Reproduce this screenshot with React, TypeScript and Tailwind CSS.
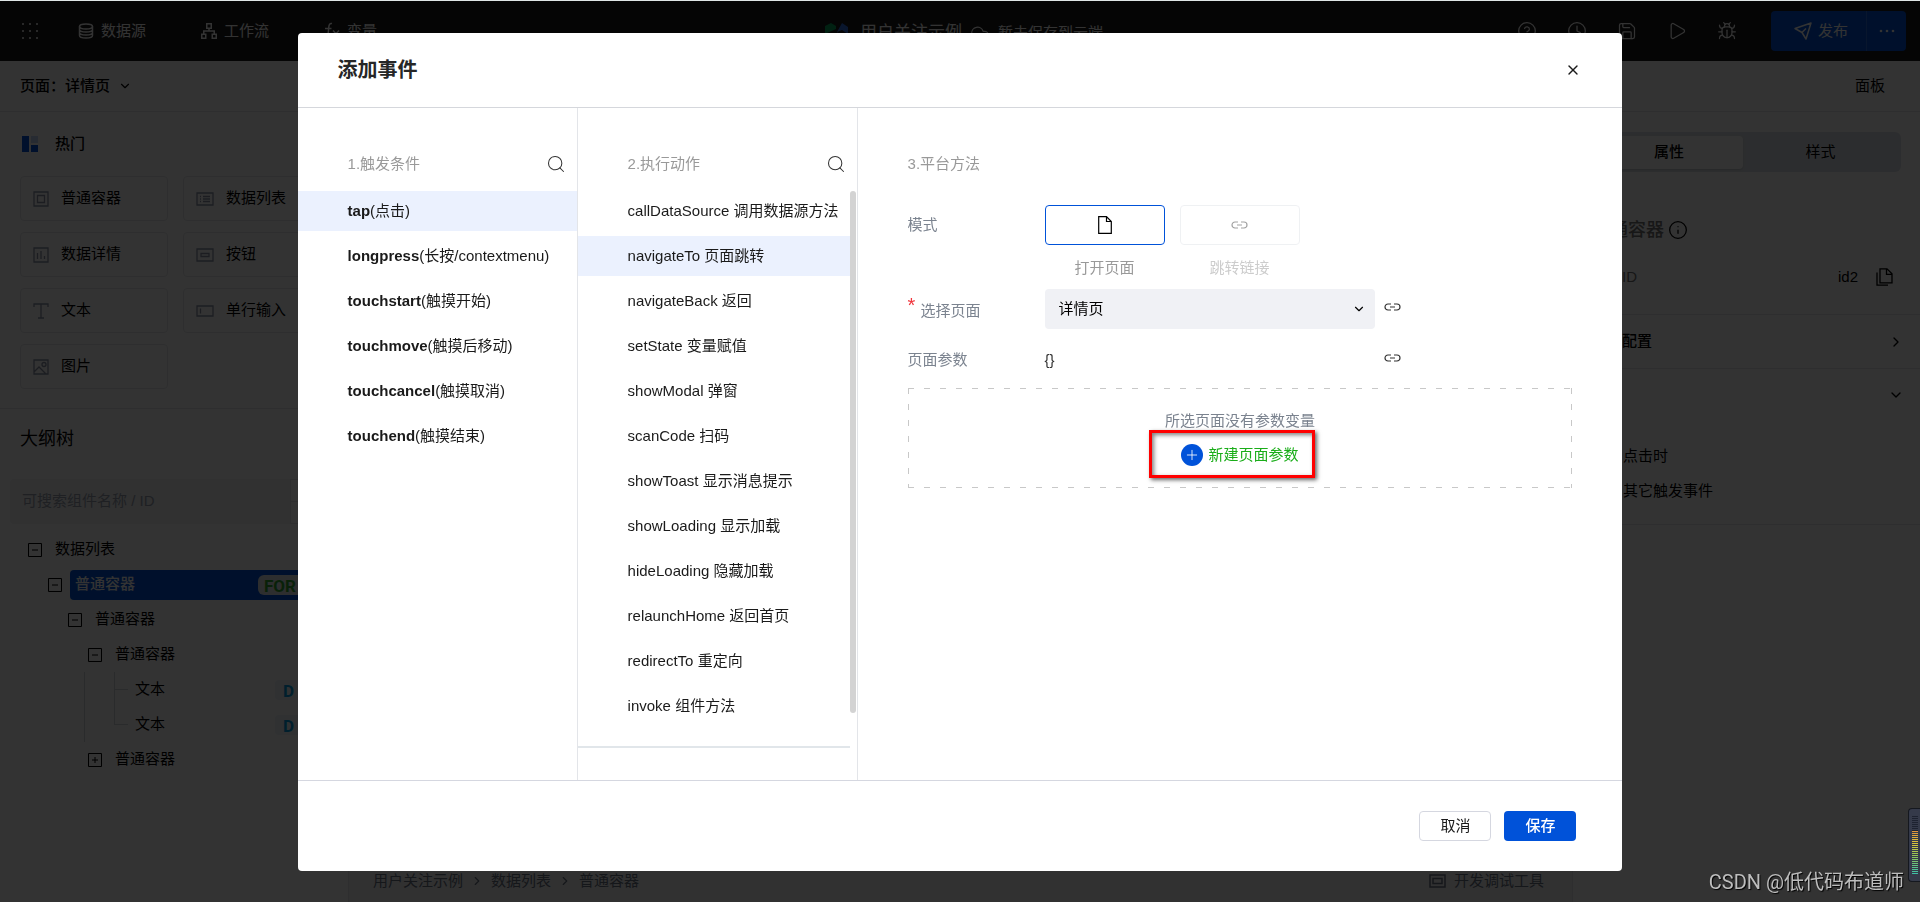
import { useState } from "react";
import type { ReactNode } from "react";
import {
  Bug,
  ChevronDown,
  ChevronRight,
  CircleHelp,
  Clock,
  Cloud,
  Info,
  Play,
  Plus,
  Save,
  Search,
  X,
} from "lucide-react";

interface Trigger {
  name: string;
  desc: string;
}

interface Action {
  name: string;
  desc: string;
}

const TRIGGERS: Trigger[] = [
  { name: "tap", desc: "(点击)" },
  { name: "longpress", desc: "(长按/contextmenu)" },
  { name: "touchstart", desc: "(触摸开始)" },
  { name: "touchmove", desc: "(触摸后移动)" },
  { name: "touchcancel", desc: "(触摸取消)" },
  { name: "touchend", desc: "(触摸结束)" },
];

const ACTIONS: Action[] = [
  { name: "callDataSource", desc: "调用数据源方法" },
  { name: "navigateTo", desc: "页面跳转" },
  { name: "navigateBack", desc: "返回" },
  { name: "setState", desc: "变量赋值" },
  { name: "showModal", desc: "弹窗" },
  { name: "scanCode", desc: "扫码" },
  { name: "showToast", desc: "显示消息提示" },
  { name: "showLoading", desc: "显示加载" },
  { name: "hideLoading", desc: "隐藏加载" },
  { name: "relaunchHome", desc: "返回首页" },
  { name: "redirectTo", desc: "重定向" },
  { name: "invoke", desc: "组件方法" },
];

/* ---------- icons ---------- */

function GridIcon() {
  return (
    <svg width="16" height="16" viewBox="0 0 16 16" fill="currentColor">
      {[0, 7, 14].map((y) => [0, 7, 14].map((x) => <rect key={`${x}-${y}`} x={x} y={y} width="2" height="2" rx="1" />))}
    </svg>
  );
}

function DatabaseIcon() {
  return (
    <svg width="16" height="16" viewBox="0 0 16 16" fill="none" stroke="currentColor" strokeWidth="1.5">
      <ellipse cx="8" cy="3.5" rx="6.5" ry="2.5" />
      <path d="M1.5 3.5v9c0 1.4 2.9 2.5 6.5 2.5s6.5-1.1 6.5-2.5v-9M1.5 6.5c0 1.4 2.9 2.5 6.5 2.5s6.5-1.1 6.5-2.5M1.5 9.5c0 1.4 2.9 2.5 6.5 2.5s6.5-1.1 6.5-2.5" />
    </svg>
  );
}

function FlowIcon() {
  return (
    <svg width="16" height="16" viewBox="0 0 16 16" fill="none" stroke="currentColor" strokeWidth="1.5">
      <path d="M5.75.75h4.5v4.5h-4.5zM.75 11.25h4v4h-4zM11.25 11.25h4v4h-4zM8 5.5V8M2.75 11V8h10.5v3" />
    </svg>
  );
}

function FxIcon() {
  return (
    <svg width="16" height="18" viewBox="0 0 16 18" fill="none" stroke="currentColor" strokeWidth="1.5">
      <path d="M8 1.500C5.500 1 5 3 4.800 5L4 13c-.3 2.500-1.500 3-3 2.500M1 6.500h6.500M9 8.500l6 6.500M15 8.500l-6 6.500" />
    </svg>
  );
}

function LogoIcon() {
  return (
    <svg width="23" height="20" viewBox="0 0 23 20">
      <path d="M0 3 6 0l5 3v3L0 11z" fill="#07a35a" />
      <path d="M0 11l6 3 5-4v6l-5 4-6-4z" fill="#078a4d" />
      <path d="M12 9 17 0l6 4v7l-6-4z" fill="#2f6fe0" />
      <path d="M12 9v7l5 4 6-4v-5l-6 3z" fill="#2458bd" />
    </svg>
  );
}

function SendIcon() {
  return (
    <svg width="18" height="18" viewBox="0 0 18 18" fill="none" stroke="currentColor" strokeWidth="1.5" strokeLinejoin="round">
      <path d="M1 6.500 17 1l-5 16-4-6.500zM8 10.500l4-4" />
    </svg>
  );
}

function DotsIcon() {
  return (
    <svg width="16" height="4" viewBox="0 0 16 4" fill="currentColor">
      <circle cx="2" cy="2" r="1.3" />
      <circle cx="8" cy="2" r="1.3" />
      <circle cx="14" cy="2" r="1.3" />
    </svg>
  );
}

function LinkIcon() {
  return (
    <svg width="17" height="8" viewBox="0 0 17 8" fill="none" stroke="currentColor" strokeWidth="1.2">
      <path d="M7 1H4a3 3 0 0 0 0 6h3M10 1h3a3 3 0 0 1 0 6h-3M6 4h5" />
    </svg>
  );
}

function FileIcon() {
  return (
    <svg width="16" height="18" viewBox="0 0 16 18" fill="none" stroke="currentColor" strokeWidth="1.2">
      <path d="M1.700.7h7.800l4.800 4.800v11.800H1.700zM9.500.7v4.800h4.800" />
    </svg>
  );
}

function CopyIcon() {
  return (
    <svg width="17" height="18" viewBox="0 0 17 18" fill="none" stroke="currentColor" strokeWidth="1.3">
      <path d="M4 .8h7l5 5v9H4zM10.500.8v5.500H16M1 4.500v12.700h11" />
    </svg>
  );
}

function ToggleIcon({ open }: { open: boolean }) {
  return (
    <svg width="14" height="14" viewBox="0 0 14 14" fill="none" stroke="currentColor">
      <path d="M.5.5h13v13H.5zM4 7h6" />
      {!open && <path d="M7 4v6" />}
    </svg>
  );
}

const COMPONENTS: { label: string; width: number; icon: string }[] = [
  { label: "普通容器", width: 16, icon: "M1 1h14v14H1zM4.5 4.5h7v7h-7z" },
  { label: "数据列表", width: 18, icon: "M1 2h16v12H1zM4 5.5h1M7 5.5h7M4 8h1M7 8h7M4 10.5h1M7 10.5h7" },
  { label: "数据详情", width: 16, icon: "M1 1h14v14H1zM4.5 6v6M8 4v8M11.5 9v3" },
  { label: "按钮", width: 18, icon: "M1 2h16v12H1zM5 6.5h8v3H5z" },
  { label: "文本", width: 16, icon: "M1 4V1h14v3M8 1v14M5 15h6" },
  { label: "单行输入", width: 18, icon: "M1 3h16v10H1zM4.5 5.5v5" },
  { label: "图片", width: 16, icon: "M1 1h14v14H1zM1 13l5-5 7 7M9 5.5a2 2 0 1 0 4 0 2 2 0 1 0-4 0" },
];

/* ---------- editor behind the dialog ---------- */

function TopBar() {
  return (
    <header className="flex h-[60px] items-center bg-[#1a1a1a] pr-3.5 pl-[22px] text-white">
      <div className="flex flex-1 items-center">
        <button aria-label="菜单" className="mr-10">
          <GridIcon />
        </button>
        <nav className="flex items-center gap-[55px]">
          <a href="#data" className="flex items-center gap-[7px]">
            <DatabaseIcon />
            数据源
          </a>
          <a href="#flow" className="flex items-center gap-[7px]">
            <FlowIcon />
            工作流
          </a>
          <a href="#vars" className="flex items-center gap-[7px]">
            <FxIcon />
            变量
          </a>
        </nav>
      </div>
      <div className="flex items-center gap-2 pt-1">
        <LogoIcon />
        <span className="ml-1 text-[17px]">用户关注示例</span>
        <Cloud size={20} strokeWidth={1.5} />
        <span>暂未保存到云端</span>
      </div>
      <div className="flex flex-1 items-center justify-end gap-[30px]">
        <button aria-label="帮助">
          <CircleHelp size={20} strokeWidth={1.5} />
        </button>
        <button aria-label="历史">
          <Clock size={20} strokeWidth={1.5} />
        </button>
        <button aria-label="保存草稿">
          <Save size={20} strokeWidth={1.5} />
        </button>
        <button aria-label="预览">
          <Play size={20} strokeWidth={1.5} />
        </button>
        <button aria-label="调试">
          <Bug size={20} strokeWidth={1.5} />
        </button>
        <div className="ml-1 flex h-10 overflow-hidden rounded bg-[#0052d9]">
          <button className="flex items-center gap-1.5 border-r border-[#2a6fe0] pr-[18px] pl-[23px]">
            <SendIcon />
            发布
          </button>
          <button aria-label="更多" className="w-[39px] pl-3">
            <DotsIcon />
          </button>
        </div>
      </div>
    </header>
  );
}

function TreeRow({ pad, open, children }: { pad: string; open?: boolean; children: ReactNode }) {
  return (
    <li className={`flex h-[35px] items-center gap-[13px] ${pad}`}>
      {open !== undefined && <ToggleIcon open={open} />}
      {children}
    </li>
  );
}

function DataBadge() {
  return (
    <span className="ml-auto h-5 w-[63px] rounded bg-[#eef4fb] pl-2 font-[Roboto] text-[17px] leading-[22px] font-bold text-[#009de0]">
      D
    </span>
  );
}

function LeftPanel() {
  return (
    <aside className="w-[349px] shrink-0 border-r border-gray-200">
      <section className="border-b border-gray-200 pt-5 pr-[17px] pb-[19px] pl-5">
        <h2 className="flex h-6 items-center gap-[17px] pl-0.5 font-medium">
          <svg width="16" height="16" viewBox="0 0 16 16">
            <path d="M0 0h7v16H0z" fill="#0052d9" />
            <path d="M9 0h7v7H9z" fill="#c3d6f8" />
            <path d="M9 9h7v7H9z" fill="#0052d9" />
          </svg>
          热门
        </h2>
        <div className="mt-5 grid grid-cols-2 gap-x-[15px] gap-y-[11px]">
          {COMPONENTS.map((c) => (
            <button key={c.label} className="flex h-[45px] items-center gap-3 rounded border border-gray-200 pl-3">
              <svg width={c.width} height="16" viewBox={`0 0 ${c.width} 16`} fill="none" stroke="#8a93a6" strokeWidth="1.3">
                <path d={c.icon} />
              </svg>
              {c.label}
            </button>
          ))}
        </div>
      </section>
      <section className="pt-4">
        <h2 className="px-5 text-lg leading-7">大纲树</h2>
        <div className="mt-[26px] flex h-[45px] px-2.5">
          <input
            aria-label="搜索组件"
            placeholder="可搜索组件名称 / ID"
            className="min-w-0 flex-1 rounded-l bg-gray-100 px-3 placeholder:text-gray-400"
          />
          <div className="w-12 border border-gray-200">
            <div className="h-[22px] border-b border-gray-200" />
          </div>
        </div>
        <ul className="mt-2 pr-2.5">
          <TreeRow pad="pl-7" open>
            数据列表
          </TreeRow>
          <TreeRow pad="pl-12" open>
            <span className="-ml-[5px] flex h-[30px] flex-1 items-center rounded-sm bg-[#0052d9] pl-[5px] font-medium text-white">
              普通容器
              <span className="ml-auto h-5 w-20 rounded-md bg-[#dfe5ea] pl-1.5 font-[Roboto] text-[17px] leading-[22px] font-bold text-[#2fa52f]">
                FOR
              </span>
            </span>
          </TreeRow>
          <TreeRow pad="pl-[68px]" open>
            普通容器
          </TreeRow>
          <TreeRow pad="pl-[88px]" open>
            普通容器
          </TreeRow>
          {/* leaf rows with guide lines */}
          <li className="ml-[84px] flex border-l border-gray-300">
            <div className="ml-[29px] w-3.5">
              <div className="h-[18px] border-b border-l border-gray-300" />
              <div className="h-[35px] border-b border-l border-gray-300" />
            </div>
            <ul className="flex-1 pl-[7px]">
              <TreeRow pad="">
                文本
                <DataBadge />
              </TreeRow>
              <TreeRow pad="">
                文本
                <DataBadge />
              </TreeRow>
            </ul>
          </li>
          <TreeRow pad="pl-[88px]" open={false}>
            普通容器
          </TreeRow>
        </ul>
      </section>
    </aside>
  );
}

function RightPanel() {
  return (
    <aside className="w-[348px] shrink-0 border-l border-gray-200">
      <section className="border-b border-gray-200 px-[19px] pt-5 pb-6">
        <div className="flex h-10 rounded-md bg-[#dde2e8] p-[3px] pt-1">
          <button className="w-[148px] rounded-sm bg-white font-medium shadow">属性</button>
          <button className="flex-1">样式</button>
        </div>
        <h2 className="mt-11 flex h-7 items-center gap-1 text-lg font-medium text-neutral-500">
          普通容器
          <Info size={20} strokeWidth={1.5} className="text-black" />
        </h2>
        <div className="mt-5 flex h-[26px] items-center pr-2">
          <span className="font-medium text-neutral-500">组件ID</span>
          <span className="mr-[18px] ml-auto">id2</span>
          <button aria-label="复制">
            <CopyIcon />
          </button>
        </div>
      </section>
      <section className="flex h-[54px] items-center justify-between border-b border-gray-200 pr-4 pl-[19px] font-medium">
        基础配置
        <ChevronRight size={16} />
      </section>
      <section className="border-b border-gray-200 pr-4 pb-4 pl-[50px]">
        <div className="flex h-[52px] items-center justify-end">
          <ChevronDown size={16} />
        </div>
        <p className="mt-[17px] h-[35px] leading-[35px]">点击时</p>
        <p className="h-[35px] leading-[35px]">其它触发事件</p>
      </section>
    </aside>
  );
}

function Editor() {
  return (
    <div className="flex flex-1 flex-col bg-white">
      <TopBar />
      <div className="flex h-[51px] items-center justify-between border-b border-gray-200 pr-[35px] pl-5">
        <button className="flex items-center gap-2 font-medium">
          页面：详情页
          <ChevronDown size={14} />
        </button>
        <button>面板</button>
      </div>
      <div className="flex flex-1">
        <LeftPanel />
        <main className="flex min-w-0 flex-1 flex-col justify-end bg-[#f4f5f6]">
          <footer className="flex h-[42px] items-center gap-[7px] pr-7 pl-6 text-gray-500">
            用户关注示例
            <ChevronRight size={14} />
            数据列表
            <ChevronRight size={14} />
            普通容器
            <button className="ml-auto flex items-center gap-2">
              <svg width="17" height="14" viewBox="0 0 17 14" fill="none" stroke="currentColor" strokeWidth="1.5">
                <path d="M1 1h15v12H1zM4 4.5h9v5H4z" />
              </svg>
              开发调试工具
            </button>
          </footer>
        </main>
        <RightPanel />
      </div>
    </div>
  );
}

/* ---------- dialog ---------- */

function ColumnTitle({ children, searchable }: { children: ReactNode; searchable?: boolean }) {
  return (
    <div className="flex h-[83px] items-end justify-between pr-[11px] pb-[17px] pl-[50px] leading-5 text-[#999]">
      <h3>{children}</h3>
      {searchable && (
        <button aria-label="搜索" className="text-[#333]">
          <Search size={20} strokeWidth={1.25} />
        </button>
      )}
    </div>
  );
}

function PageJumpForm() {
  const [mode, setMode] = useState("page");

  return (
    <section className="min-w-0 flex-1">
      <ColumnTitle>3.平台方法</ColumnTitle>
      <div className="px-[50px] pt-3.5 text-[#7b838f]">
        <div className="flex">
          <span className="w-[137px] leading-10">模式</span>
          <div className="flex gap-[15px] text-center">
            <div className="w-[120px]">
              <button
                aria-label="打开页面"
                aria-pressed={mode === "page"}
                onClick={() => setMode("page")}
                className="flex h-10 w-full items-center justify-center rounded border border-[#0052d9] text-black"
              >
                <FileIcon />
              </button>
              <p className="mt-2 leading-[30px] text-[#999]">打开页面</p>
            </div>
            <div className="w-[120px] opacity-50">
              <button
                aria-label="跳转链接"
                aria-pressed={mode === "link"}
                onClick={() => setMode("link")}
                className="flex h-10 w-full items-center justify-center rounded border border-[#e0e3e8] text-[#444]"
              >
                <LinkIcon />
              </button>
              <p className="mt-2 leading-[30px] text-[#999]">跳转链接</p>
            </div>
          </div>
        </div>

        <div className="mt-1.5 flex h-10 items-center">
          <label htmlFor="target-page" className="flex w-[137px] gap-[5px] pt-1 leading-10">
            <span className="text-xl leading-7 text-[#f0353c]">*</span>
            选择页面
          </label>
          <div className="relative w-[330px]">
            <select
              id="target-page"
              className="h-10 w-full appearance-none rounded bg-[#f0f1f5] px-3.5 text-black"
            >
              <option>详情页</option>
            </select>
            <ChevronDown size={14} className="pointer-events-none absolute top-[13px] right-[9px] text-black" />
          </div>
          <button aria-label="绑定页面" className="mb-1 ml-[9px] text-[#333]">
            <LinkIcon />
          </button>
        </div>

        <div className="mt-[11px] flex h-10 items-center">
          <span className="w-[137px]">页面参数</span>
          <span className="w-[330px] text-[#333]">{"{}"}</span>
          <button aria-label="绑定参数" className="mb-1 ml-[9px] text-[#333]">
            <LinkIcon />
          </button>
        </div>

        <div className="mt-2 flex flex-col items-center gap-2.5 bg-[repeating-linear-gradient(90deg,#c8c8c8_0_6px,transparent_6px_16px),repeating-linear-gradient(90deg,#c8c8c8_0_6px,transparent_6px_16px),repeating-linear-gradient(180deg,#c8c8c8_0_6px,transparent_6px_16px),repeating-linear-gradient(180deg,#c8c8c8_0_6px,transparent_6px_16px)] bg-[length:100%_1px,100%_1px,1px_100%,1px_100%] bg-[position:top,bottom,left,right] bg-no-repeat py-[21px]">
          <p className="leading-6">所选页面没有参数变量</p>
          <div className="relative">
            <button className="flex h-6 items-center gap-[5px] text-[#1aad19]">
              <span className="flex size-[22px] items-center justify-center rounded-full bg-[#0052d9] text-white">
                <Plus size={16} strokeWidth={1.25} />
              </span>
              新建页面参数
            </button>
            <div className="pointer-events-none absolute -top-[13px] -right-4 -bottom-[11px] -left-8 border-3 border-[#ff0000] shadow-[2px_2px_4px_rgba(0,0,0,0.6),inset_2px_2px_4px_rgba(0,0,0,0.5)]" />
          </div>
        </div>
      </div>
    </section>
  );
}

function AddEventDialog() {
  const [trigger, setTrigger] = useState("tap");
  const [action, setAction] = useState("navigateTo");

  return (
    <div role="dialog" aria-label="添加事件" className="flex w-[69%] flex-col rounded bg-white text-[#1a1a1a]">
      <header className="flex h-[75px] shrink-0 items-center justify-between border-b border-[#d5d7dc] pr-[41px] pl-10">
        <h1 className="text-xl font-bold text-[#262626]">添加事件</h1>
        <button aria-label="关闭">
          <X size={16} strokeWidth={2} />
        </button>
      </header>

      <div className="flex flex-1">
        <section className="w-[280px] shrink-0 border-r border-[#e3e5e9]">
          <ColumnTitle searchable>1.触发条件</ColumnTitle>
          <ul className="flex flex-col gap-[5px]">
            {TRIGGERS.map((t) => (
              <li key={t.name}>
                <button
                  onClick={() => setTrigger(t.name)}
                  className={`h-10 w-full pl-[50px] text-left ${trigger === t.name ? "bg-[#ebf1fe]" : ""}`}
                >
                  <b>{t.name}</b>
                  {t.desc}
                </button>
              </li>
            ))}
          </ul>
        </section>

        <section className="w-[280px] shrink-0 border-r border-[#e3e5e9]">
          <ColumnTitle searchable>2.执行动作</ColumnTitle>
          <div className="flex">
            <div className="flex-1 border-b-2 border-[#e1e6ea] pb-[15px]">
              <ul className="flex flex-col gap-[5px]">
                {ACTIONS.map((a) => (
                  <li key={a.name}>
                    <button
                      onClick={() => setAction(a.name)}
                      className={`h-10 w-full pl-[50px] text-left whitespace-nowrap ${action === a.name ? "bg-[#ebf1fe]" : ""}`}
                    >
                      {a.name} {a.desc}
                    </button>
                  </li>
                ))}
              </ul>
              <div className="h-[5px]" />
            </div>
            {/* scroll thumb */}
            <div className="mr-px h-[522px] w-1.5 rounded-full bg-[#d3d3d3]" />
          </div>
        </section>

        <PageJumpForm />
      </div>

      <footer className="flex h-[91px] shrink-0 items-center justify-end gap-[13px] border-t border-[#d5d7e0] pr-[46px]">
        <button className="h-[30px] w-[72px] rounded-sm border border-[#d5d7e0]">取消</button>
        <button className="h-[30px] w-[72px] rounded-sm bg-[#0052d9] font-medium text-white">保存</button>
      </footer>
    </div>
  );
}

export default function App() {
  return (
    <div className="flex min-h-screen flex-col border-t border-[#dfe6e6] font-['Liberation_Sans','Noto_Sans_CJK_SC',sans-serif] text-[15px] text-black">
      <Editor />
      <div className="fixed inset-x-0 top-px bottom-0 flex justify-center bg-black/80 pt-8 pb-[31px]">
        <AddEventDialog />
      </div>

      {/* volume meter docked at the screen edge */}
      <div className="fixed right-0 bottom-5 flex h-[74px] w-3 flex-col rounded-l border-y border-l border-[#15181f] bg-[#353a4a] py-[7px] pr-0.5 pl-[3px]">
        <div className="h-[15px] bg-[repeating-linear-gradient(180deg,#1d2230_0_1px,#353a4a_1px_2px)]" />
        <div className="flex-1 bg-[repeating-linear-gradient(180deg,transparent_0_1px,#353a4a_1px_2px),linear-gradient(180deg,#e0963a,#d8c83c_30%,#8fc45a_60%,#3cc0a8)]" />
      </div>
      <p className="fixed right-4 bottom-1 font-['Roboto','Noto_Sans_CJK_SC',sans-serif] text-xl leading-8 text-[#bdbdbd] [text-shadow:1px_1px_1px_#000]">
        CSDN @低代码布道师
      </p>
    </div>
  );
}
